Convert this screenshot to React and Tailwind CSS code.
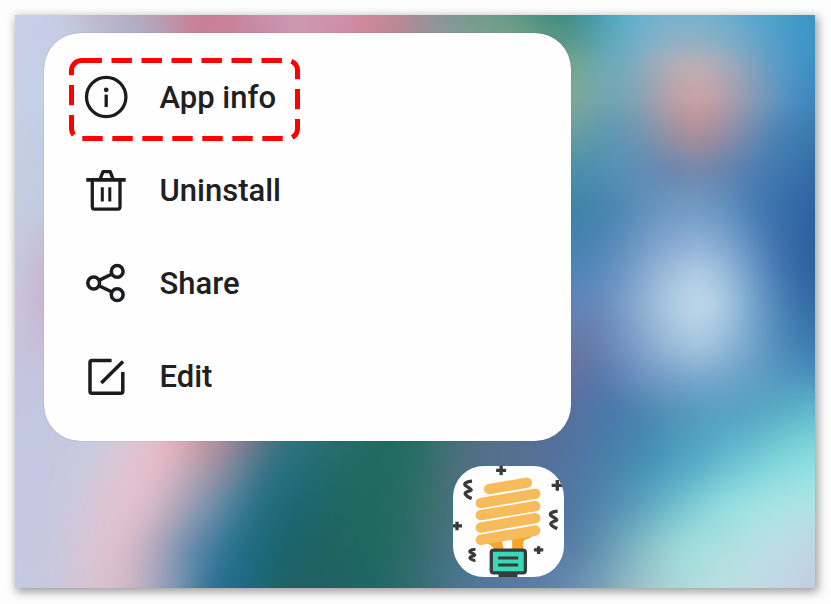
import React from 'react';

// Wallpaper colour field. Each key row is [y, xs, colours]; rows inside a band
// share a stop count, so both stop position and colour blend between them.
const RIGHT = [575, 600, 625, 650, 675, 700, 725, 750, 775, 800, 815];

const TOP = [
  [15, [15, 60, 85, 115, 135, 165, 195, 225, 265, 300, 340, 375, 400, 430, 460, 500, 540, 560, ...RIGHT],
    'cacfea c6cde4 c6b9cb bcb3c9 b7a9bd c396ab c68195 c97f96 cb93ad cb9ab3 cf91aa cc8799 bd8a97 94919a 78988f 679a87 47907f 3c8980 3d8c92 449eae 5bb0cb 6db3d0 72b2cf 70b3cf 66b0cf 5aa9d0 4ba2cc 3f98c8 3b95c5'],
  [32, [15, 70, 95, 120, 140, 165, 190, 225, 265, 300, 350, 385, 415, 445, 480, 515, 550, 565, ...RIGHT],
    'cacfea c4cbe2 bdc2d8 b0b3ca a9b0cc b59fb8 c68298 c78199 c78aa8 cf97b3 d08ba2 c78493 a58b97 8b9a9a 7da18f 75a288 5a9783 559686 55988f 58a3b0 65aec7 7db1c9 8db1c6 8eb1c5 7fafc7 6aa7ca 529fc9 4197c8 3b93c4'],
];

// The stretch behind the menu carries the neighbouring strip colours inward.
const MID_X = [15, 43, 80, 540, ...RIGHT];
const MIDDLE = [
  [50, 'cacfea c6cfe8 c3cbe3 6d9d87 649f8f 62a7b2 6dadc2 8cb0c3 a8b1bc abb1bd 96aebe 79a5c4 589dc7 4296c8 3b93c4'],
  [60, 'cacfea c5cfe8 c3cce4 7aa487 6fa68c 6aaab4 74abc0 95aebf b4b0b8 bab0b8 a3aebb 82a4c0 5c9cc6 4395c8 3c90c4'],
  [97, 'c8cfe6 c2d3ea c2d3ea 86aa8c 80a898 74a8b0 78a5b5 9ba3b2 c0a2a6 d0a3a5 b8a1aa 8f9db4 6697bf 458dc3 3d86bd'],
  [130, 'c4d0e3 c0cde6 c0cde6 73a490 6a9f9e 5d9aae 6696b4 7f94ae a5929f b68f98 9b8fa2 748cb0 4f85b5 3f7fb5 3a78b0'],
  [170, 'c4cfe1 c2cbdf c2cbdf 4c8f98 4c8fa8 4f90b4 5a90b5 6289b3 6a86ac 7486a9 6483ad 507eb0 4178b0 3871ab 326ba6'],
  [210, 'c4cde0 c3cae0 c3cae0 3a7f9b 3f83a6 4583ad 5189b5 6493bd 6f9bc3 709cc5 6393c0 4b80b5 3970ac 3068a5 2b62a0'],
  [245, 'c5cbe0 c6bfd8 c6b6d0 3f80aa 4683b0 4d86b5 628fbd 7a9fca 8bacd3 93b3d6 82a8d0 6090c0 4273b0 2f65a2 2b609d'],
  [275, 'c6c9df c8b7d0 c8b0ca 4a83b9 4f86b9 5d8bbf 7199c6 8fb0d2 a5c5df b2d0e6 9cbfdb 729fcb 4a7db5 3467a4 2e639f'],
  [305, 'c7c7de c7b6d1 c7b0cc 6383b8 6383b8 6689ba 7da0c9 98b8d6 b2d0e5 c2daec abcbe3 7daace 528aba 3870aa 326ba6'],
  [345, 'c6c3dc c6bfda c6bcd6 6e759d 6b78a4 6680b0 7694c3 8dabd0 9fc0dc a8c9e0 95bbd9 76a5cc 5590bd 417fb4 3c7ab0'],
  [375, 'c4c5e0 c4c4de c4c4de 6a6e98 6471a0 5878ab 6487ba 7199c5 7ba4cd 7eaacf 75a6cb 66a0c6 5597bf 4c93bd 4790bc'],
  [410, 'c3c6e2 c3c6e0 c3c8e0 566f98 56719f 4b76a8 4b7caa 4f88b2 5492ba 589bc1 58a0c3 55a2c3 57abc4 5eb4c9 62b8cc'],
].map(([y, c]) => [y, MID_X, c]);

const BOTTOM = [
  [410, [15, 62, 108, 135, 153, 173, 193, 213, 233, 250, 270, 290, 315, 340, 380, 410, 432, 460, 500, 540, ...RIGHT],
    'c3c6e2 c3c9e0 cbcadf d9c8d6 e0c2cf e6b0ba d898a4 c0949f a58a9a 807e8e 547486 357282 2a707a 286e6b 1f6a60 226e63 376f6b 4d6e7e 546f90 566f98 56719f 4b76a8 4b7caa 4f88b2 5492ba 589bc1 58a0c3 55a2c3 57abc4 5eb4c9 62b8cc'],
  [441, [15, 60, 100, 125, 145, 165, 185, 205, 225, 245, 265, 285, 310, 340, 380, 410, 435, 460, 500, 540, ...RIGHT],
    'c3c7e2 c3c9e0 cbcadf d9c8d6 e0c2cf e6b8c2 daa8b4 c0949f a58a9a 807e8e 547486 357282 2a707a 286e6b 1f6a60 226e63 376f6b 4d6e7e 54718c 546f97 52739f 487ba8 4683ad 458bb3 4b99bc 51a2c2 5aafcb 62b9cc 6dc5d0 78d0d6 7bd5db'],
  [470, [15, 58, 92, 115, 137, 157, 177, 197, 217, 240, 260, 280, 305, 340, 380, 410, 438, 460, 500, 540, ...RIGHT],
    'c4c7e3 c5c9e0 cecadd dcc6d4 e2c2ce e3bcc7 ceb0be b3a0ae 9490a3 68829a 3d7688 28707f 226c76 226965 206a5f 266d63 3e6f70 4c7080 54718c 546f97 5077a2 4c7faa 4989b0 4895b9 52a5c2 5db3ca 6ec3d2 7bd0d8 89dadf 8fe0e2 92e3e4'],
  [505, [15, 55, 83, 105, 130, 150, 170, 190, 210, 235, 255, 275, 300, 340, 380, 410, 440, 460, 500, 540, ...RIGHT],
    'c4c7e3 c6c9df d0c8dc dec4d2 e3c2cd d7bcc9 c0abbc 9b9fb6 7890ac 477f99 2b7287 1f6a7c 1b6672 1f6762 21695f 2a6c64 416f73 4b7482 54718c 54749d 5079a3 5186ac 5595b6 62a8c2 72bfcc 84d0d8 94dfe1 9fe4e4 a8e4e4 aee3e4 afe3e4'],
  [545, [15, 52, 80, 102, 120, 140, 160, 180, 200, 224, 246, 268, 292, 330, 375, 405, 435, 460, 505, 545, ...RIGHT],
    'c4c8e2 c7c8de d3c6d9 dfc2cf dcbfca cab4c4 a7a5bb 7f94b1 5a85a5 347896 226c83 1c6876 1c6369 206461 1f6860 2a6b66 3e6f77 4b7489 5676a0 577aa4 557fa6 6091b0 75abbd 8bc2cb 9bd8d8 a5e0e0 acdfdf b7dfe2 bcdee4 bedbe4 bfd6e2'],
  [588, [15, 50, 80, 105, 125, 145, 165, 180, 195, 212, 235, 260, 285, 320, 370, 400, 430, 460, 510, 550, ...RIGHT],
    'c4cae1 c8c8dd d6c4d5 dbc1cc d1b9c5 b9abc0 929fba 7292ae 4f82a3 2a7097 1f6c88 1b6876 1e6166 206163 1e6662 2c6a69 3c6f7c 4c7590 5a79a2 6080a9 6b90b0 78a0b8 90b8c2 a3cbcd abd8d8 b3dcdd bbdfe3 bedde4 c1d7e3 c4d0e3 c5cce2'],
];

const rgb = (hex) => [0, 2, 4].map((i) => parseInt(hex.slice(i, i + 2), 16));

const BLEED = 30;

function gradientAt(y) {
  const rows = y < 50 ? TOP : y < 410 ? MIDDLE : BOTTOM;
  let i = 0;
  while (i < rows.length - 2 && y >= rows[i + 1][0]) i++;
  const [ya, xa, ca] = rows[i];
  const [yb, xb, cb] = rows[i + 1];
  const t = Math.min(1, Math.max(0, (y - ya) / (yb - ya)));
  const A = ca.split(' ');
  const B = cb.split(' ');
  const stops = xa.map((x, k) => {
    const p = rgb(A[k]);
    const q = rgb(B[k]);
    const c = p.map((v, n) => (v + (q[n] - v) * t).toFixed(1));
    return `rgb(${c.join(' ')}) ${(x + (xb[k] - x) * t - 15 + BLEED).toFixed(1)}px`;
  });
  return `linear-gradient(90deg, ${stops.join(', ')})`;
}

const STRIPS = Array.from({ length: 317 }, (_, i) => gradientAt(16 - BLEED + i * 2));

function Wallpaper() {
  return (
    <div className="absolute inset-0 overflow-hidden">
      <div className="-m-[30px] w-[860px] blur-[9px]">
        {STRIPS.map((backgroundImage, i) => (
          <div key={i} className="h-0.5 w-full" style={{ backgroundImage }} />
        ))}
      </div>
    </div>
  );
}

const iconProps = {
  width: 48,
  height: 48,
  viewBox: '0 0 48 48',
  fill: 'none',
  stroke: '#1b1c1e',
  strokeWidth: 3.3,
};

const InfoIcon = () => (
  <svg {...iconProps}>
    <circle cx="24.2" cy="24" r="19.7" />
    <circle cx="24.2" cy="16.8" r="2.4" fill="#1b1c1e" stroke="none" />
    <path d="M24.2 21.6V34" />
  </svg>
);

const TrashIcon = () => (
  <svg {...iconProps}>
    <path d="M4.3 13.9H43.7" strokeWidth="3.6" />
    <path d="M18 13.4L21 5.7H28.2L31.2 13.4" strokeLinejoin="round" />
    <path d="M10.3 14V40.200Q10.3 43.200 12.300 43.200H36Q38 43.200 38 40.200V14" />
    <path d="M20.3 21.3V35.500M27.8 21.3V35.500" strokeWidth="3" />
  </svg>
);

const ShareIcon = () => (
  <svg {...iconProps} strokeWidth="3.5">
    <circle cx="11.7" cy="24" r="5.9" />
    <circle cx="35.2" cy="12.4" r="5.9" />
    <circle cx="35.2" cy="35.7" r="5.9" />
    <path d="M17 21.4L30 15M17 26.7L30 33" />
  </svg>
);

const EditIcon = () => (
  <svg {...iconProps} strokeWidth="3.5">
    <path d="M29.6 7.6H10Q8 7.6 8 9.6V38.300Q8 40.300 10 40.300H38.8Q40.8 40.300 40.8 38.300V19" />
    <path d="M19.3 30L41 8.4" />
  </svg>
);

const ITEMS = [
  ['App info', InfoIcon],
  ['Uninstall', TrashIcon],
  ['Share', ShareIcon],
  ['Edit', EditIcon],
];

function BulbAppIcon() {
  return (
    <svg className="block size-full" viewBox="39 33 332 332" fill="none">
      <path d="M134 264L184 250L192 290H166Q160 268 134 264Z" fill="#f6a52c" />
      <path d="M216 250L280 240Q268 252 256 253Q249 255 249 264V290H216Z" fill="#f6a52c" />
      <g stroke="#f7bb5b" strokeWidth="31" strokeLinecap="round">
        <path d="M147 102L260 83" />
        <path d="M122 144L285 116" />
        <path d="M122 180L285 153" />
        <path d="M122 217L285 189" />
        <path d="M122 254L285 226" />
      </g>
      <rect x="153.500" y="284.500" width="102" height="68" rx="7" fill="#38d9b6" stroke="#3a3a3c" strokeWidth="10" />
      <path d="M174 308.500H234M174 329H234" stroke="#3a3a3c" strokeWidth="9" />
      <path d="M175 360.500H232" stroke="#3a3a3c" strokeWidth="9" />
      <g stroke="#3a3a3c" strokeWidth="10">
        <path d="M168 46H198M183 33V60" />
        <path d="M334 91H371M351 75V107" />
        <path d="M36 212H66M51 200V225" />
        <path d="M281 284H309M295 273V296" />
        <path d="M96 78C82 79 68 85 77 92L88 99C97 105 94 106 84 109C73 113 73 117 80 122C85 127 90 128 95 130" />
        <path d="M352 168C338 169 324 175 333 182L344 189C353 195 350 196 340 199C329 203 329 207 336 212C341 217 346 218 351 220" />
        <path d="M106 283C93 282 84 288 92 292L101 296C107 300 104 301 97 303C86 306 89 310 94 312C99 315 102 316 106 315" strokeWidth="9" />
      </g>
    </svg>
  );
}

export default function App() {
  return (
    <div className="h-[604px] w-[831px] overflow-hidden bg-[#fdfdfd] p-[15px] pr-4 font-['Roboto',sans-serif]">
      <div className="relative h-[573px] w-[800px] pt-[18px] shadow-[2px_3px_9px_1px_rgba(0,0,0,0.38)]">
        <Wallpaper />
        <div className="relative ml-[29px] h-[408px] w-[527px] rounded-[36px] bg-[#fefefe] pt-[17.500px] shadow-[0_0_1px_rgba(20,40,70,0.5)]">
          <ul>
            {ITEMS.map(([label, Icon]) => (
              <li key={label} className="flex h-[93.200px] items-center pl-[38px]">
                <Icon />
                <span className="ml-[29.500px] text-[31px] leading-none font-medium text-[#1f2022]">{label}</span>
              </li>
            ))}
          </ul>
          <svg className="absolute top-[25px] left-[25px]" width="231" height="83" viewBox="0 0 231 83" fill="none">
            <path
              d="M12.500 2.500H218.500A10 10 0 0 1 228.500 12.500V70.500A10 10 0 0 1 218.500 80.500H12.500A10 10 0 0 1 2.500 70.500V12.500A10 10 0 0 1 12.500 2.500"
              stroke="#fe0000"
              strokeWidth="5"
              strokeDasharray="20.400 9.600"
            />
          </svg>
        </div>
        <div className="relative mt-[25px] ml-[438px] size-[111px] overflow-hidden rounded-[31px] bg-[#fefefe]">
          <BulbAppIcon />
        </div>
      </div>
    </div>
  );
}
